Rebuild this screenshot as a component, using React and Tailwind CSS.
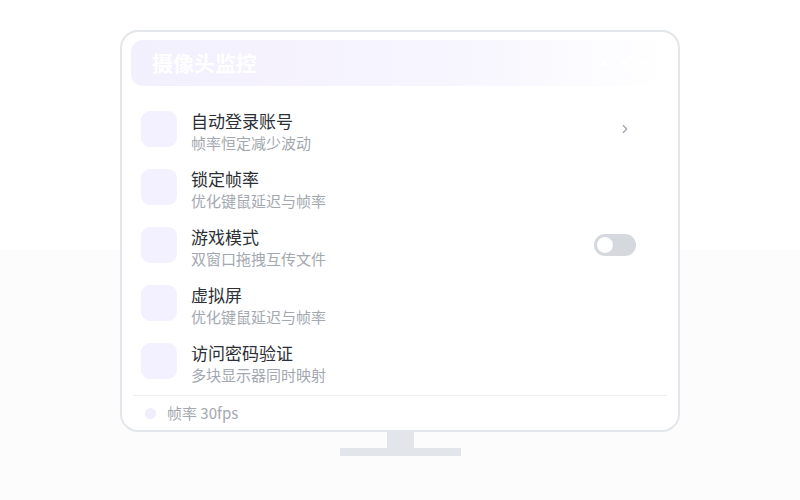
import React from 'react';
import { ChevronRight } from 'lucide-react';

const rows = [
  { title: '自动登录账号', desc: '帧率恒定减少波动', action: 'chevron' },
  { title: '锁定帧率', desc: '优化键鼠延迟与帧率' },
  { title: '游戏模式', desc: '双窗口拖拽互传文件', action: 'toggle' },
  { title: '虚拟屏', desc: '优化键鼠延迟与帧率' },
  { title: '访问密码验证', desc: '多块显示器同时映射' },
];

const Toggle = () => (
  <div className="w-[42px] h-[22px] rounded-full bg-[#d5d8dd] flex items-center px-[2px]">
    <div className="w-[18px] h-[18px] rounded-full bg-white border border-[#d1d5db]" />
  </div>
);

const SettingRow = ({ title, desc, action }) => (
  <div className="h-[58px] flex items-center pl-[10px] pr-[33px]">
    <div className="w-[36px] h-[36px] rounded-[9px] bg-[#f3f0ff] shrink-0" />
    <div className="ml-[14px] mt-[5px] flex-1">
      <div className="text-[17px] leading-[22px] text-[#2b2f36]">{title}</div>
      <div className="text-[15px] leading-[20px] mt-[1px] text-[#a3a8b0]">{desc}</div>
    </div>
    {action === 'chevron' && (
      <ChevronRight className="w-[14px] h-[14px] text-[#9ca3af] mr-[4px]" strokeWidth={2} />
    )}
    {action === 'toggle' && <Toggle />}
  </div>
);

export default function App() {
  return (
    <div
      className="w-[800px] h-[500px] flex flex-col items-center pt-[30px] bg-[linear-gradient(to_bottom,#ffffff_250px,#fcfcfd_250px)]"
      style={{ fontFamily: '"Noto Sans CJK SC", "Noto Sans", sans-serif' }}
    >
      <div className="w-[560px] h-[402px] rounded-[18px] border-2 border-[#e3e6ea] bg-white px-[9px] pt-[8px] flex flex-col">
        <div className="h-[46px] rounded-[12px] bg-[linear-gradient(to_right,#f3f0fe,#f7f5fe_60%,#ffffff)] flex items-center pl-[21px] pr-[22px]">
          <span className="text-[21px] font-bold text-white flex-1">摄像头监控</span>
          <div className="flex gap-[14px]">
            <span className="w-[6px] h-[6px] rounded-full bg-white" />
            <span className="w-[6px] h-[6px] rounded-full bg-white" />
            <span className="w-[6px] h-[6px] rounded-full bg-white" />
          </div>
        </div>
        <div className="mt-[14px]">
          {rows.map((r) => (
            <SettingRow key={r.title} {...r} />
          ))}
        </div>
        <div className="mt-[5px] mx-[2px] border-t border-[#eceef1] flex items-center h-[32px] pl-[12px] pt-[3px]">
          <span className="w-[11px] h-[11px] rounded-full bg-[#f0edfd]" />
          <span className="ml-[11px] text-[15px] text-[#a3a8b0]">帧率 30fps</span>
        </div>
      </div>
      <div className="w-[27px] h-[16px] bg-[#e2e5e9]" />
      <div className="w-[121px] h-[8px] bg-[#e2e5e9]" />
    </div>
  );
}
